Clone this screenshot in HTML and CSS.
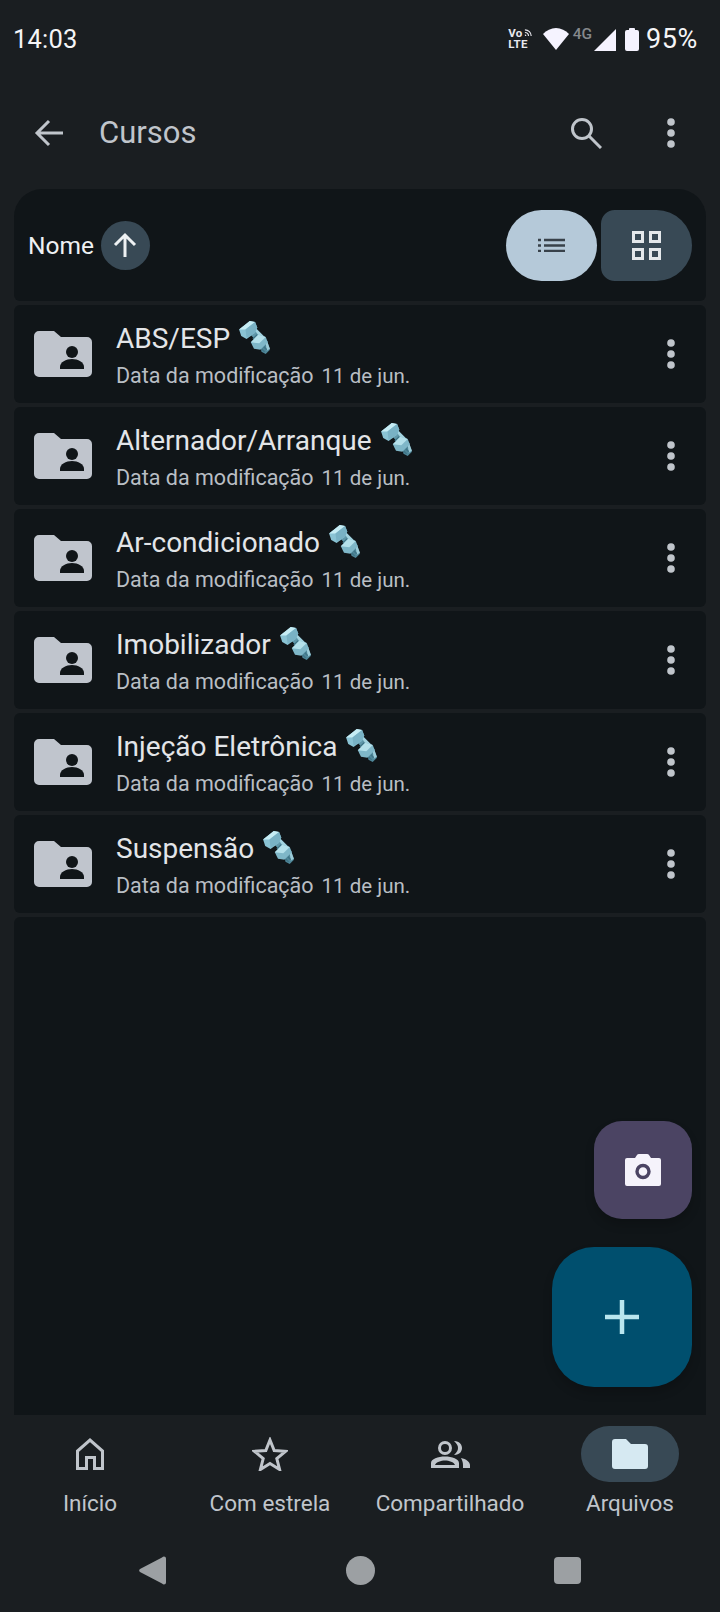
FILE: index.html
```html
<!DOCTYPE html>
<html lang="pt-BR">
<head>
  <meta charset="UTF-8">
  <meta name="viewport" content="width=device-width, initial-scale=1.0">
  <title>Cursos</title>
  <link rel="stylesheet" href="styles.css">
</head>
<body>
  <svg class="defs" width="0" height="0">
    <defs>
      <symbol id="bolt" viewBox="0 0 30 31">
        <path d="M11 12 L17 7 L25 15 L19 21Z" fill="#5f97a9"/>
        <path d="M15 8 L17 7 L25 15 L22 17Z" fill="#a3d3df"/>
        <path d="M15 10l-4 4M18 13l-4 4M21 15l-4 4" stroke="#3f7486" stroke-width="1.300"/>
        <path d="M21 23 L27 18 L30 27 L26 31 L22 29Z" fill="#4f8799"/>
        <path d="M26 21 L27 18 L30 26 L27 28Z" fill="#9bcbd8"/>
        <path d="M24 24l3 3M22 26l3 3" stroke="#3f7486" stroke-width="1.300"/>
        <path d="M12 20 L19 13 L26 15 L28 20 L21 27 L15 26Z" fill="#7fb7c8"/>
        <path d="M12 20 L19 13 L26 15 L20 21Z" fill="#b4e0ea"/>
        <path d="M1 8 L11 0 L16 1 L18 6 L16 11 L8 17 L3 14Z" fill="#8ac3d4"/>
        <path d="M1 8 L11 0 L16 1 L7 8Z" fill="#c6edf5"/>
        <path d="M7 8 L16 1 L18 6 L16 11 L8 16Z" fill="#79b2c5"/>
      </symbol>
      <symbol id="folder-shared" viewBox="0 0 58 46">
        <path d="M5 0H20L27 6H53a5 5 0 0 1 5 5V41a5 5 0 0 1-5 5H5a5 5 0 0 1-5-5V5a5 5 0 0 1 5-5Z" fill="#c0c5cd"/>
        <circle cx="38" cy="21" r="6" fill="#101518"/>
        <path d="M26 38v-2c0-5 6-8 12-8s12 3 12 8v2Z" fill="#101518"/>
      </symbol>
      <symbol id="kebab" viewBox="0 0 10 32">
        <circle cx="5" cy="5" r="3.800" fill="currentColor"/>
        <circle cx="5" cy="16" r="3.800" fill="currentColor"/>
        <circle cx="5" cy="27" r="3.800" fill="currentColor"/>
      </symbol>
    </defs>
  </svg>

  <div class="status-bar">
    <span class="clock">14:03</span>
    <div class="status-icons">
      <span class="volte">Vo<svg class="volte-waves" viewBox="0 0 10 10"><path d="M1 2c4 0 7 3 7 7M1 5c2.500 0 4 1.500 4 4M1 8c.7 0 1 .3 1 1" fill="none" stroke="#e8e8ee" stroke-width="1.300"/></svg><br>LTE</span>
      <svg class="wifi" viewBox="0 0 26 22"><path d="M0 6C3.500 2.500 8 0 13 0s9.500 2.500 13 6L13 22Z" fill="#f5f3ff"/></svg>
      <span class="net">4G</span>
      <svg class="signal" viewBox="0 0 22 22"><path d="M22 0V22H0Z" fill="#f5f3ff"/></svg>
      <svg class="battery" viewBox="0 0 14 23"><path d="M4 2V1a1 1 0 0 1 1-1h4a1 1 0 0 1 1 1v1h2a2 2 0 0 1 2 2v17a2 2 0 0 1-2 2H2a2 2 0 0 1-2-2V4a2 2 0 0 1 2-2Z" fill="#f5f3ff"/></svg>
      <span class="percent">95%</span>
    </div>
  </div>

  <header class="top-bar">
    <svg class="back-icon" viewBox="0 0 30 28"><path d="M29 14H3M15 2 3 14l12 12" fill="none" stroke="#c0c5cb" stroke-width="3"/></svg>
    <h1 class="title">Cursos</h1>
    <svg class="search-icon" viewBox="0 0 32 32"><circle cx="12" cy="12" r="9.500" fill="none" stroke="#c0c5cb" stroke-width="3"/><path d="M19 19 31 31" stroke="#c0c5cb" stroke-width="3"/></svg>
    <svg class="kebab"><use href="#kebab"/></svg>
  </header>

  <main class="files">
    <div class="sort-card">
      <span class="sort-label">Nome</span>
      <span class="sort-btn">
        <svg viewBox="0 0 24 26" class="sort-arrow"><path d="M12 25V3M2 13 12 3l10 10" fill="none" stroke="#eef1f3" stroke-width="3"/></svg>
      </span>
      <div class="view-toggle">
        <span class="toggle toggle-on">
          <svg class="list-icon" viewBox="0 0 27 14"><path d="M6 2H27M6 7.500H27M6 13H27" stroke="#38414a" stroke-width="2.700"/><path d="M0 2H3M0 7.500H3M0 13H3" stroke="#38414a" stroke-width="2.400"/></svg>
        </span>
        <span class="toggle toggle-off">
          <svg class="grid-icon" viewBox="0 0 29 29"><path d="M1.500 1.500H10.500V10.500H1.500ZM18.500 1.500H27.500V10.500H18.500ZM1.500 18.500H10.500V27.500H1.500ZM18.500 18.500H27.500V27.500H18.500Z" fill="none" stroke="#e4e8eb" stroke-width="3"/></svg>
        </span>
      </div>
    </div>

    <div class="row">
      <svg class="folder"><use href="#folder-shared"/></svg>
      <div class="row-text">
        <div class="row-name">ABS/ESP <svg class="bolt"><use href="#bolt"/></svg></div>
        <div class="row-meta"><span>Data da modificação</span><span class="row-date">11 de jun.</span></div>
      </div>
      <svg class="kebab"><use href="#kebab"/></svg>
    </div>
    <div class="row">
      <svg class="folder"><use href="#folder-shared"/></svg>
      <div class="row-text">
        <div class="row-name">Alternador/Arranque <svg class="bolt"><use href="#bolt"/></svg></div>
        <div class="row-meta"><span>Data da modificação</span><span class="row-date">11 de jun.</span></div>
      </div>
      <svg class="kebab"><use href="#kebab"/></svg>
    </div>
    <div class="row">
      <svg class="folder"><use href="#folder-shared"/></svg>
      <div class="row-text">
        <div class="row-name">Ar-condicionado <svg class="bolt"><use href="#bolt"/></svg></div>
        <div class="row-meta"><span>Data da modificação</span><span class="row-date">11 de jun.</span></div>
      </div>
      <svg class="kebab"><use href="#kebab"/></svg>
    </div>
    <div class="row">
      <svg class="folder"><use href="#folder-shared"/></svg>
      <div class="row-text">
        <div class="row-name">Imobilizador <svg class="bolt"><use href="#bolt"/></svg></div>
        <div class="row-meta"><span>Data da modificação</span><span class="row-date">11 de jun.</span></div>
      </div>
      <svg class="kebab"><use href="#kebab"/></svg>
    </div>
    <div class="row">
      <svg class="folder"><use href="#folder-shared"/></svg>
      <div class="row-text">
        <div class="row-name">Injeção Eletrônica <svg class="bolt"><use href="#bolt"/></svg></div>
        <div class="row-meta"><span>Data da modificação</span><span class="row-date">11 de jun.</span></div>
      </div>
      <svg class="kebab"><use href="#kebab"/></svg>
    </div>
    <div class="row">
      <svg class="folder"><use href="#folder-shared"/></svg>
      <div class="row-text">
        <div class="row-name">Suspensão <svg class="bolt"><use href="#bolt"/></svg></div>
        <div class="row-meta"><span>Data da modificação</span><span class="row-date">11 de jun.</span></div>
      </div>
      <svg class="kebab"><use href="#kebab"/></svg>
    </div>

    <div class="empty-space"></div>
  </main>

  <button class="fab fab-camera">
    <svg class="camera-icon" viewBox="0 0 36 32"><path d="M2 4H10L12 1Q12.500 0 14 0H22Q23.500 0 24 1L26 4H34a2 2 0 0 1 2 2V30a2 2 0 0 1-2 2H2a2 2 0 0 1-2-2V6a2 2 0 0 1 2-2Z" fill="#f5f3fb"/><circle cx="18" cy="17.500" r="6" fill="#f5f3fb" stroke="#4b4463" stroke-width="3.400"/></svg>
  </button>
  <button class="fab fab-add">
    <svg class="plus-icon" viewBox="0 0 34 34"><path d="M17 0V34M0 17H34" stroke="#b9e6ef" stroke-width="4.500"/></svg>
  </button>

  <nav class="bottom-nav">
    <div class="nav-item">
      <span class="nav-icon">
        <svg viewBox="0 0 28 32" width="28" height="32"><path d="M1.500 30.500V13L14 2l12.500 11V30.500H18.500V19.500H10.500V30.500Z" fill="none" stroke="#c0c5cb" stroke-width="3"/></svg>
      </span>
      <span class="nav-label">Início</span>
    </div>
    <div class="nav-item">
      <span class="nav-icon">
        <svg viewBox="0 0 36 34" width="36" height="34"><path d="M18 3l4.200 10.500 11.300.800-8.700 7.200 2.800 11L18 26.500 8.400 32.500l2.800-11-8.700-7.200 11.300-.800Z" fill="none" stroke="#c0c5cb" stroke-width="3"/></svg>
      </span>
      <span class="nav-label">Com estrela</span>
    </div>
    <div class="nav-item">
      <span class="nav-icon">
        <svg viewBox="0 0 39 27" width="39" height="27"><circle cx="14" cy="7" r="5.500" fill="none" stroke="#c0c5cb" stroke-width="3"/><path fill-rule="evenodd" d="M0 27V22C0 18 7 15.500 14 15.500S28 18 28 22V27ZM4 24H24C23 21 18 19.500 14 19.500S5 21 4 24Z" fill="#c0c5cb"/><path d="M23 0C29 0 31 4 31 7s-2 7-8 7c3-3 4-4.500 4-7S26 3 23 0ZM30 17C35 18 39 21 39 24v3H32v-3c0-3-1-5-2-7Z" fill="#c0c5cb"/></svg>
      </span>
      <span class="nav-label">Compartilhado</span>
    </div>
    <div class="nav-item nav-active">
      <span class="nav-icon">
        <svg viewBox="0 0 36 30" width="36" height="30"><path d="M3 0H14L19 5H33a3 3 0 0 1 3 3V27a3 3 0 0 1-3 3H3a3 3 0 0 1-3-3V3a3 3 0 0 1 3-3Z" fill="#d6e9f2"/></svg>
      </span>
      <span class="nav-label">Arquivos</span>
    </div>
  </nav>

  <div class="system-nav">
    <svg class="sys-back" viewBox="0 0 27 29"><path d="M25 0.500a2 2 0 0 1 2 2V26.500a2 2 0 0 1-2 2Q24 28.500 23 27.500L1 16a2 2 0 0 1 0-3L23 1.500Q24 .5 25 .5Z" fill="#9ca0a3"/></svg>
    <span class="sys-home"></span>
    <span class="sys-recent"></span>
  </div>
</body>
</html>
```

FILE: styles.css
```css
* {
  box-sizing: border-box;
}

body {
  margin: 0;
  width: 720px;
  height: 1612px;
  position: relative;
  display: flex;
  flex-direction: column;
  overflow: hidden;
  background-color: #1a1e21;
  color: #e3e5e8;
  font-family: Roboto, "Liberation Sans", sans-serif;
}

.defs {
  position: absolute;
}

/* status bar */
.status-bar {
  height: 78px;
  flex-shrink: 0;
  display: flex;
  align-items: center;
  justify-content: space-between;
  padding: 0 22px 0 13px;
}

.clock {
  font-size: 25.5px;
  letter-spacing: 0.2px;
  color: #f5f5f7;
}

.status-icons {
  display: flex;
  align-items: center;
}

.volte {
  font-size: 11.5px;
  font-weight: 700;
  line-height: 11px;
  color: #e8e8ee;
  margin-right: 10px;
  letter-spacing: 0.4px;
}

.volte-waves {
  width: 9px;
  height: 9px;
  margin-left: 1px;
}

.wifi {
  width: 26px;
  height: 22px;
}

.net {
  font-size: 15.5px;
  font-weight: 500;
  color: #85888c;
  margin: -10px 2px 0 4px;
}

.signal {
  width: 22px;
  height: 22px;
  margin-top: 2px;
}

.battery {
  width: 14px;
  height: 23px;
  margin-left: 9px;
}

.percent {
  font-size: 27px;
  letter-spacing: 0.6px;
  color: #f5f5f7;
  margin-left: 7px;
}

/* top bar */
.top-bar {
  height: 111px;
  flex-shrink: 0;
  display: flex;
  align-items: center;
  padding: 0 44px 2px 34px;
}

.back-icon {
  width: 30px;
  height: 28px;
  margin-right: 35px;
}

.title {
  margin: 0;
  flex: 1;
  font-size: 31px;
  font-weight: 400;
  color: #c0c5cb;
}

.search-icon {
  width: 32px;
  height: 32px;
  margin-right: 64px;
}

.kebab {
  width: 10px;
  height: 32px;
  flex-shrink: 0;
  color: #c0c5cb;
}

/* file list */
.files {
  flex: 1;
  display: flex;
  flex-direction: column;
  gap: 4px;
  margin: 0 14px;
}

.sort-card {
  height: 112px;
  flex-shrink: 0;
  display: flex;
  align-items: center;
  padding: 0 14px 0 14px;
  background-color: #101518;
  border-radius: 28px 28px 6px 6px;
}

.sort-label {
  font-size: 24.5px;
  color: #eef1f3;
  margin-right: 7px;
}

.sort-btn {
  width: 49px;
  height: 49px;
  border-radius: 50%;
  background-color: #384955;
  display: flex;
  align-items: center;
  justify-content: center;
}

.sort-arrow {
  width: 24px;
  height: 26px;
}

.view-toggle {
  margin-left: auto;
  display: flex;
  gap: 4px;
}

.toggle {
  width: 91px;
  height: 71px;
  display: flex;
  align-items: center;
  justify-content: center;
}

.toggle-on {
  background-color: #b5c9d9;
  border-radius: 36px;
}

.toggle-off {
  background-color: #384955;
  border-radius: 14px 36px 36px 14px;
}

.list-icon {
  width: 27px;
  height: 14px;
}

.grid-icon {
  width: 29px;
  height: 29px;
}

.row {
  height: 98px;
  flex-shrink: 0;
  display: flex;
  align-items: center;
  padding: 0 16px 0 20px;
  background-color: #101518;
  border-radius: 6px;
}

.folder {
  width: 58px;
  height: 46px;
  flex-shrink: 0;
}

.row-text {
  flex: 1;
  margin-left: 24px;
}

.row-name {
  display: flex;
  align-items: center;
  height: 36px;
  margin-top: 1px;
  font-size: 28px;
  color: #e3e5e8;
  white-space: pre;
}

.bolt {
  width: 32px;
  height: 33px;
  margin-left: 1px;
  margin-top: -2px;
}

.row-meta {
  display: flex;
  gap: 8px;
  font-size: 21.5px;
  line-height: 26px;
  margin-top: 6px;
  color: #b9bec4;
}

.row-date {
  font-size: 20.5px;
}

.row .kebab {
  margin-right: 14px;
}

.empty-space {
  flex: 1;
  background-color: #101518;
  border-radius: 6px 6px 0 0;
}

/* floating buttons */
.fab {
  position: absolute;
  right: 28px;
  padding: 0;
  border: none;
  display: flex;
  align-items: center;
  justify-content: center;
  box-shadow: 0 6px 10px rgba(0, 0, 0, 0.18);
}

.fab-camera {
  top: 1121px;
  width: 98px;
  height: 98px;
  border-radius: 28px;
  background-color: #4b4463;
}

.camera-icon {
  width: 36px;
  height: 32px;
}

.fab-add {
  top: 1247px;
  width: 140px;
  height: 140px;
  border-radius: 42px;
  background-color: #004f6e;
}

.plus-icon {
  width: 34px;
  height: 34px;
}

/* bottom navigation */
.bottom-nav {
  height: 118px;
  flex-shrink: 0;
  display: grid;
  grid-template-columns: repeat(4, 1fr);
  padding-top: 11px;
}

.nav-item {
  display: flex;
  flex-direction: column;
  align-items: center;
}

.nav-icon {
  width: 98px;
  height: 56px;
  display: flex;
  align-items: center;
  justify-content: center;
  border-radius: 28px;
}

.nav-active .nav-icon {
  background-color: #384955;
}

.nav-label {
  margin-top: 7px;
  font-size: 22.5px;
  line-height: 28px;
  color: #c0c5cb;
}

.system-nav {
  height: 79px;
  flex-shrink: 0;
  position: relative;
  display: flex;
  align-items: flex-start;
  padding-top: 23px;
}

.sys-back {
  width: 27px;
  height: 29px;
  margin-left: 139px;
}

.sys-home {
  width: 29px;
  height: 29px;
  margin-left: 180px;
  border-radius: 50%;
  background-color: #9ca0a3;
}

.sys-recent {
  width: 27px;
  height: 27px;
  margin-left: 179px;
  margin-top: 1px;
  border-radius: 4px;
  background-color: #9ca0a3;
}
```
